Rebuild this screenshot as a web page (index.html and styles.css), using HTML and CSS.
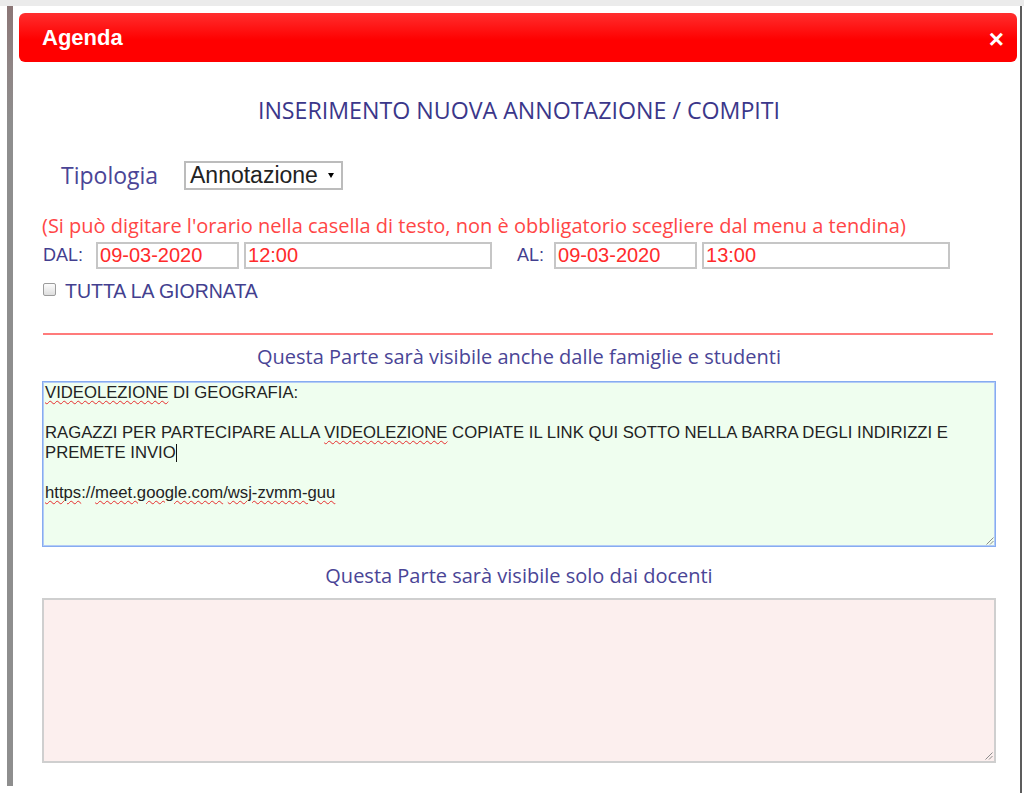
FILE: index.html
```html
<!DOCTYPE html>
<html lang="it">
<head>
<meta charset="utf-8">
<title>Agenda</title>
<link rel="stylesheet" href="styles.css">
</head>
<body>
<div class="screen">
  <div class="edge-left"></div>
  <div class="modal">
    <div class="modal-header">
      <span class="modal-title">Agenda</span>
      <span class="close">×</span>
    </div>
    <div class="modal-body">
      <div class="title">INSERIMENTO NUOVA ANNOTAZIONE / COMPITI</div>
      <div class="tipo-row">
        <span class="tipo-label">Tipologia</span>
        <div class="select"><span class="select-text">Annotazione</span><span class="arrow"></span></div>
      </div>
      <div class="note">(Si può digitare l'orario nella casella di testo, non è obbligatorio scegliere dal menu a tendina)</div>
      <div class="date-row">
        <span class="lbl lbl-dal">DAL:</span>
        <span class="field field-date field-first">09-03-2020</span>
        <span class="field field-time">12:00</span>
        <span class="lbl lbl-al">AL:</span>
        <span class="field field-date field-al">09-03-2020</span>
        <span class="field field-time">13:00</span>
      </div>
      <div class="check-row">
        <span class="cb"></span>
        <span class="check-label">TUTTA LA GIORNATA</span>
      </div>
      <div class="rule"></div>
      <div class="section-head">Questa Parte sarà visibile anche dalle famiglie e studenti</div>
      <div class="area area-public">
        <div class="line"><span class="sp">VIDEOLEZIONE</span> DI GEOGRAFIA:</div>
        <div class="line line-empty"></div>
        <div class="line">RAGAZZI PER PARTECIPARE ALLA <span class="sp">VIDEOLEZIONE</span> COPIATE IL LINK QUI SOTTO NELLA BARRA DEGLI INDIRIZZI E</div>
        <div class="line">PREMETE INVIO<span class="caret"></span></div>
        <div class="line line-empty"></div>
        <div class="line"><span class="sp">https</span>://<span class="sp">meet.google.com</span>/<span class="sp">wsj-zvmm-guu</span></div>
        <svg class="grip" width="10" height="10" viewBox="0 0 10 10"><path d="M9.5 2.5 L2.5 9.5 M9.5 6 L6 9.5" stroke="#8c8c8c" stroke-width="1" fill="none"/></svg>
      </div>
      <div class="section-head section-head-2">Questa Parte sarà visibile solo dai docenti</div>
      <div class="area area-private">
        <svg class="grip" width="10" height="10" viewBox="0 0 10 10"><path d="M9.5 2.5 L2.5 9.5 M9.5 6 L6 9.5" stroke="#8c8c8c" stroke-width="1" fill="none"/></svg>
      </div>
    </div>
  </div>
  <div class="edge-right"></div>
</div>
</body>
</html>
```
FILE: styles.css
```css
html, body {
  margin: 0;
  padding: 0;
}
body {
  width: 1024px;
  height: 793px;
  overflow: hidden;
  background: #fff;
  font-family: "Liberation Sans", Arial, sans-serif;
}
.screen {
  display: flex;
  height: 787px;
  padding-top: 6px;
  background: linear-gradient(#ebebeb 0, #ebebeb 6px, #fff 6px);
}
.edge-left {
  width: 6px;
  margin-left: 7px;
  height: 780px;
  background: linear-gradient(#8b7676 0, #8f8585 60px, #8e8e8e 120px, #8e8e8e 100%);
}
.modal {
  width: 1007px;
  background: #fff;
  display: flex;
  flex-direction: column;
}
.edge-right {
  width: 2px;
  background: #5c5c5c;
}
.modal-header {
  margin: 7px 3px 0 6px;
  height: 49px;
  border-radius: 6px;
  background: linear-gradient(#ff2e2e 0, #ff0000 55%, #ff0000 100%);
  display: flex;
  align-items: center;
  justify-content: space-between;
  padding: 0 13px 0 23px;
  color: #fff;
}
.modal-title {
  font-weight: bold;
  font-size: 22px;
}
.close {
  font-weight: bold;
  font-size: 26px;
  margin-top: 3px;
}
.modal-body {
  padding: 0 24px 0 29px;
  display: flex;
  flex-direction: column;
}
.title {
  margin-top: 32px;
  font: 23.2px/32px "Open Sans", sans-serif;
  text-align: center;
  color: #3b378a;
}
.tipo-row {
  margin-top: 35px;
  height: 29px;
  display: flex;
  align-items: center;
}
.tipo-label {
  margin-left: 19px;
  width: 123px;
  font: 23px/29px "Open Sans", sans-serif;
  color: #4a4596;
}
.select {
  box-sizing: border-box;
  width: 159px;
  height: 29px;
  border: 2px solid #bcbcbc;
  display: flex;
  align-items: center;
  padding-left: 4px;
}
.select-text {
  font: 23px/25px "Liberation Sans", Arial, sans-serif;
  color: #222;
}
.arrow {
  margin-left: auto;
  margin-right: 7px;
  width: 0;
  height: 0;
  border-left: 3.5px solid transparent;
  border-right: 3.5px solid transparent;
  border-top: 5px solid #000;
}
.note {
  margin-top: 23px;
  font: 20px/26px "Open Sans", sans-serif;
  color: #ff4646;
  white-space: nowrap;
}
.date-row {
  margin-top: 3px;
  height: 27px;
  display: flex;
  align-items: center;
}
.lbl {
  font: 18px/27px "Liberation Sans", Arial, sans-serif;
  color: #433f8f;
}
.lbl-dal {
  margin-left: 1px;
}
.lbl-al {
  margin-left: 25px;
}
.field {
  box-sizing: border-box;
  height: 27px;
  border: 2px solid #c6c6c6;
  padding: 0 2px;
  font: 20px/23px "Liberation Sans", Arial, sans-serif;
  color: #ff2b2b;
  white-space: nowrap;
}
.field-date {
  width: 143px;
}
.field-time {
  width: 248px;
  margin-left: 5px;
}
.field-first {
  margin-left: 13px;
}
.field-al {
  margin-left: 10px;
}
.check-row {
  margin-top: 12px;
  height: 20px;
  display: flex;
  align-items: flex-start;
}
.cb {
  box-sizing: border-box;
  width: 13px;
  height: 13px;
  margin: 2px 0 0 1px;
  border: 1px solid #9c9c9c;
  border-radius: 2px;
  background: linear-gradient(#fcfcfc, #dedede);
}
.check-label {
  margin-left: 9px;
  font: 19.5px/20px "Liberation Sans", Arial, sans-serif;
  color: #433f8f;
}
.rule {
  margin: 32px 3px 0 1px;
  height: 2px;
  background: #ff7b7b;
}
.section-head {
  margin-top: 10px;
  font: 20px/24px "Open Sans", sans-serif;
  text-align: center;
  color: #4a4596;
}
.section-head-2 {
  margin-top: 17px;
}
.area {
  position: relative;
  box-sizing: border-box;
  margin-top: 12px;
  height: 166px;
  padding: 1px 2px 0;
  font: 16.7px/20px "Liberation Sans", Arial, sans-serif;
  color: #222;
}
.area-public {
  border: 1px solid #86acf0;
  box-shadow: inset 0 0 0 1px #b3cbf6;
  background: #effeef;
}
.area-private {
  margin-top: 10px;
  height: 165px;
  border: 2px solid #cfcfcf;
  background: #fcefee;
}
.line {
  white-space: nowrap;
}
.line-empty {
  height: 20px;
}
.sp {
  text-decoration: underline wavy #e62e2e;
  text-decoration-thickness: 1px;
  text-underline-offset: 2px;
}
.caret {
  display: inline-block;
  width: 1px;
  height: 18px;
  background: #111;
  vertical-align: text-bottom;
}
.grip {
  position: absolute;
  right: 1px;
  bottom: 1px;
}
```
